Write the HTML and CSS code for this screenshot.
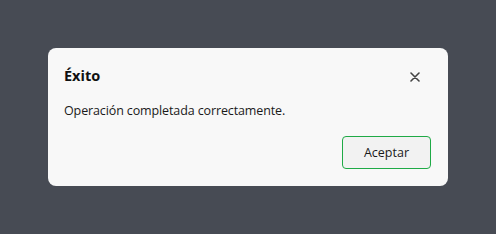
FILE: index.html
```html
<!DOCTYPE html>
<html lang="es">
<head>
<meta charset="utf-8">
<link rel="stylesheet" href="styles.css">
</head>
<body>
<div class="overlay">
  <div class="dialog" role="dialog">
    <div class="header">
      <h2 class="title">Éxito</h2>
      <button class="close" aria-label="Cerrar">
        <svg width="10" height="10" viewBox="0 0 10 10"><path d="M1 1L9 9M9 1L1 9" stroke="#444" stroke-width="1.6" stroke-linecap="round"/></svg>
      </button>
    </div>
    <p class="message">Operación completada correctamente.</p>
    <div class="footer">
      <button class="ok">Aceptar</button>
    </div>
  </div>
</div>
</body>
</html>
```
FILE: styles.css
```css
html, body { margin: 0; padding: 0; }
body {
  width: 496px; height: 234px;
  background: #474b54;
  font-family: "Open Sans", "Noto Sans", sans-serif;
  color: #1a1a1a;
}
.overlay {
  padding: 48px;
  box-sizing: border-box;
  height: 234px;
}
.dialog {
  width: 400px;
  height: 138px;
  box-sizing: border-box;
  background: #f8f8f8;
  border-radius: 8px;
  padding: 17px 16px 16px;
  display: flex;
  flex-direction: column;
}
.header {
  display: flex;
  align-items: center;
  justify-content: space-between;
  height: 22px;
}
.title {
  margin: 0;
  font-size: 14.5px;
  font-weight: 700;
  line-height: 24px;
  color: #111;
}
.close {
  border: 0;
  background: none;
  padding: 0;
  width: 22px; height: 22px;
  display: flex; align-items: center; justify-content: center;
  margin-right: 6px;
  margin-top: 1px;
}
.message {
  margin: 15px 0 0;
  font-size: 12.5px;
  letter-spacing: -0.12px;
  line-height: 18px;
  color: #1a1a1a;
}
.footer {
  margin-top: auto;
  display: flex;
  justify-content: flex-end;
}
.ok {
  width: 89px;
  height: 33px;
  margin: 0 1px 1px 0;
  border: 1px solid #1faa46;
  border-radius: 4px;
  background: #f2f2f2;
  font-family: "Open Sans", "Noto Sans", sans-serif;
  font-size: 12.5px;
  color: #1a1a1a;
}
```
